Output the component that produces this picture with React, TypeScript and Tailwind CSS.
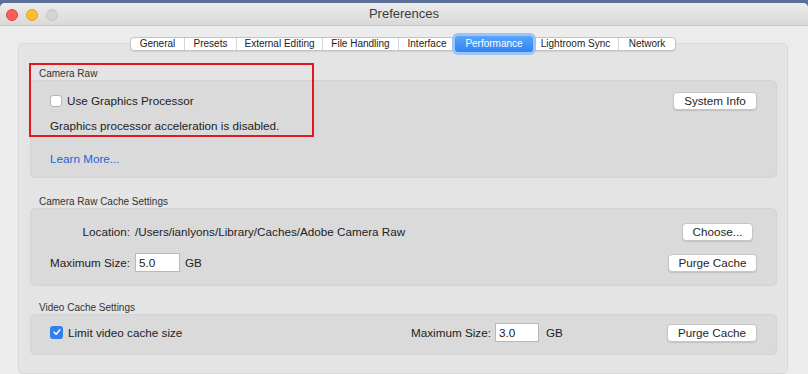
import React from "react";

const TABS: { label: string; w: string }[] = [
  { label: "General", w: "w-[53px]" },
  { label: "Presets", w: "w-[52px]" },
  { label: "External Editing", w: "w-[86px]" },
  { label: "File Handling", w: "w-[76px]" },
  { label: "Interface", w: "w-[57px]" },
  { label: "Performance", w: "w-[78px]" },
  { label: "Lightroom Sync", w: "w-[85px]" },
  { label: "Network", w: "w-[57px]" },
];

const font = { fontFamily: '"Liberation Sans", Arial, sans-serif' };

function MacButton({ children, className = "" }: { children: React.ReactNode; className?: string }) {
  return (
    <button
      type="button"
      className={`h-[18px] rounded-[4px] border border-[#c6c6c6] bg-white text-[11.7px] leading-none text-[#262626] shadow-[0_1px_1px_rgba(0,0,0,0.12)] ${className}`}
    >
      {children}
    </button>
  );
}

function SectionLabel({ children }: { children: React.ReactNode }) {
  return <div className="pl-[9px] text-[10px] leading-[12px] text-[#333]">{children}</div>;
}

function Box({ children, className = "" }: { children: React.ReactNode; className?: string }) {
  return (
    <div className={`rounded-[5px] border border-[#d3d3d3] bg-[#dadada] ${className}`}>{children}</div>
  );
}

function TextInput({ value, className = "" }: { value: string; className?: string }) {
  return (
    <div
      className={`flex h-[19px] items-center border border-[#b9b9b9] bg-white pl-[3px] text-[11.7px] text-[#222] ${className}`}
    >
      {value}
    </div>
  );
}

export default function App() {
  return (
    <div className="h-[374px] w-[808px] overflow-hidden bg-[#5a7096]" style={font}>
      <div className="mt-[3px] flex h-[371px] flex-col overflow-hidden rounded-t-[5px] bg-[#ececec]">
        {/* Title bar */}
        <div className="relative flex h-[23px] shrink-0 items-center justify-center border-b border-[#c9c9c9] bg-gradient-to-b from-[#ececec] to-[#d9d9d9]">
          <div className="absolute left-[6px] top-[6px] flex gap-[8px]">
            <span className="h-[12px] w-[12px] rounded-full border border-[#e0443e] bg-[#fd5f57]" />
            <span className="h-[12px] w-[12px] rounded-full border border-[#dea123] bg-[#febc2e]" />
            <span className="h-[12px] w-[12px] rounded-full border border-[#c4c4c4] bg-[#d4d4d4]" />
          </div>
          <span className="text-[13px] text-[#3c3c3c]">Preferences</span>
        </div>

        {/* Content */}
        <div className="flex flex-1 flex-col pl-[18px] pr-[20px] pt-[11px]">
          <div className="relative z-10 flex justify-center">
            <div className="flex h-[14px] rounded-[4px] border border-[#c3c3c3] bg-white shadow-[0_1px_1px_rgba(0,0,0,0.08)]">
              {TABS.map((t, i) => (
                <div
                  key={t.label}
                  className={`flex items-center justify-center text-[10px] leading-none ${t.w} ${
                    t.label === "Performance"
                      ? "-my-[2px] rounded-[3px] bg-gradient-to-b from-[#5aa3fa] to-[#2f83f4] text-white ring-[3px] ring-[#9cc4f5]"
                      : "text-[#222]"
                  } ${i > 0 && t.label !== "Performance" && TABS[i - 1].label !== "Performance" ? "border-l border-[#d5d5d5]" : ""}`}
                >
                  {t.label}
                </div>
              ))}
            </div>
          </div>

          <div className="-mt-[8px] flex-1 rounded-[5px] border border-[#d8d8d8] bg-[#e4e4e4] pl-[11px] pr-[10px] pt-[24px]">
            {/* Camera Raw */}
            <div className="relative">
              <div className="absolute -left-[1px] -top-[5px] h-[74px] w-[285px] border-2 border-[#e3181e]" />
              <SectionLabel>Camera Raw</SectionLabel>
              <Box className="pb-[11px] pl-[19px] pr-[19px] pt-[11px]">
                <div className="flex h-[18px] items-center justify-between">
                  <label className="flex items-center gap-[5px] text-[11.7px] text-[#222]">
                    <span className="h-[12px] w-[12px] rounded-[3px] border border-[#b5b5b5] bg-white" />
                    Use Graphics Processor
                  </label>
                  <MacButton className="w-[84px]">System Info</MacButton>
                </div>
                <div className="mt-[9px] text-[11.7px] leading-[14px] text-[#222]">
                  Graphics processor acceleration is disabled.
                </div>
                <div className="mt-[19px] text-[11.7px] leading-[14px] text-[#1e63d6]">Learn More...</div>
              </Box>
            </div>

            {/* Camera Raw Cache */}
            <div className="mt-[18px]">
              <SectionLabel>Camera Raw Cache Settings</SectionLabel>
              <Box className="pb-[13px] pr-[19px] pt-[14px]">
                <div className="flex h-[18px] items-center">
                  <span className="w-[104px] pr-[5px] text-right text-[11.7px] text-[#222]">Location:</span>
                  <span className="flex-1 text-[11.7px] text-[#222]">/Users/ianlyons/Library/Caches/Adobe Camera Raw</span>
                  <MacButton className="mr-[4px] w-[71px]">Choose...</MacButton>
                </div>
                <div className="mt-[12px] flex h-[19px] items-center">
                  <span className="w-[104px] pr-[5px] text-right text-[11.7px] text-[#222]">Maximum Size:</span>
                  <TextInput value="5.0" className="w-[45px]" />
                  <span className="ml-[5px] flex-1 text-[11.7px] text-[#222]">GB</span>
                  <MacButton className="w-[89px]">Purge Cache</MacButton>
                </div>
              </Box>
            </div>

            {/* Video Cache */}
            <div className="mt-[16px]">
              <SectionLabel>Video Cache Settings</SectionLabel>
              <Box className="pb-[12px] pl-[19px] pr-[19px] pt-[8px]">
                <div className="flex h-[19px] items-center">
                  <label className="flex w-[361px] items-center gap-[5px] text-[11.7px] text-[#222]">
                    <span className="flex h-[13px] w-[13px] items-center justify-center rounded-[3px] bg-[#2f7fef]">
                      <svg viewBox="0 0 12 12" className="h-[10px] w-[10px]">
                        <path d="M2.5 6.2 5 8.6 9.5 3.4" fill="none" stroke="white" strokeWidth="1.8" strokeLinecap="round" strokeLinejoin="round" />
                      </svg>
                    </span>
                    Limit video cache size
                  </label>
                  <span className="pr-[4px] text-[11.7px] text-[#222]">Maximum Size:</span>
                  <TextInput value="3.0" className="w-[44px]" />
                  <span className="ml-[7px] flex-1 text-[11.7px] text-[#222]">GB</span>
                  <MacButton className="w-[90px]">Purge Cache</MacButton>
                </div>
              </Box>
            </div>
          </div>
        </div>
      </div>
    </div>
  );
}
